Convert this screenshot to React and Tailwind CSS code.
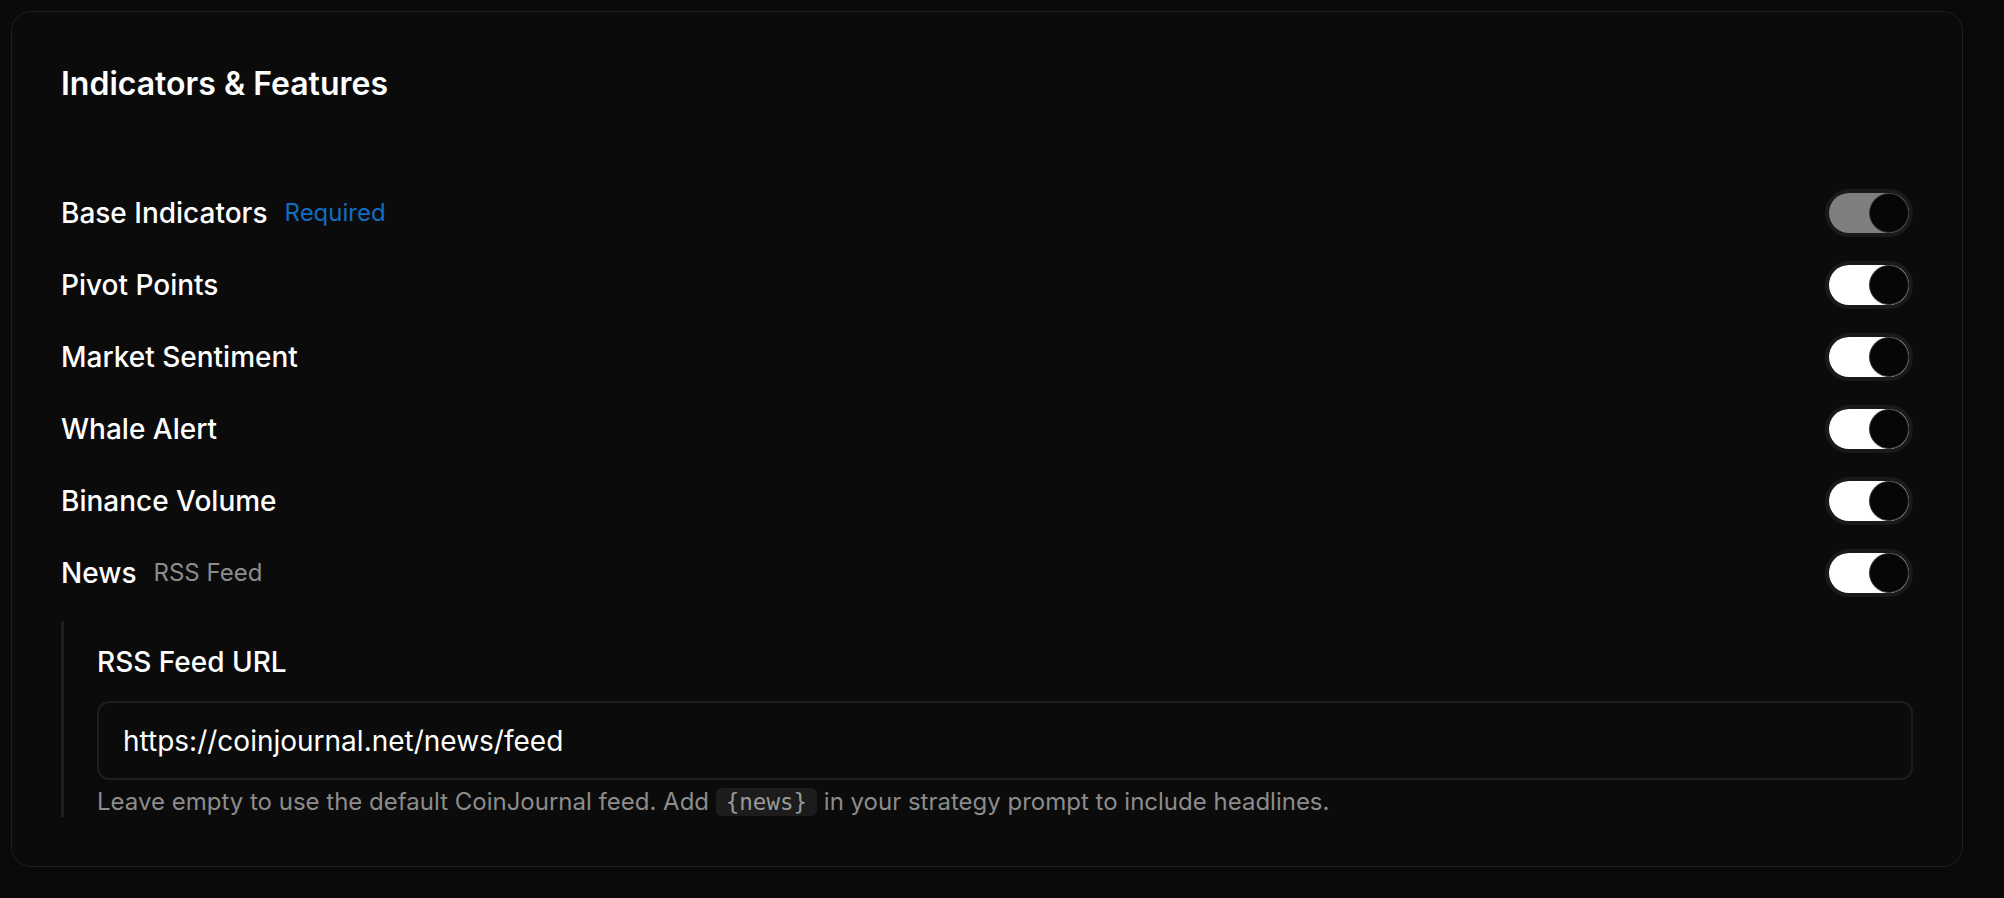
import React, { useState } from "react";

const features = [
  { key: "base", label: "Base Indicators", tag: "Required", tagTone: "blue", locked: true },
  { key: "pivot", label: "Pivot Points" },
  { key: "sentiment", label: "Market Sentiment" },
  { key: "whale", label: "Whale Alert" },
  { key: "volume", label: "Binance Volume" },
  { key: "news", label: "News", tag: "RSS Feed", tagTone: "gray" },
];

// Toggle switch
function Toggle({ checked, disabled, onChange }) {
  return (
    <button
      type="button"
      onClick={() => !disabled && onChange(!checked)}
      className="rounded-full border-4 border-[#1a1a1a] p-0"
    >
      <span
        className={`flex h-[40px] w-[80px] items-center rounded-full ${
          checked ? "justify-end" : "justify-start"
        } ${
          disabled
            ? "bg-[#7f7f7f]"
            : "bg-gradient-to-r from-white via-white to-[#e6e6e6]"
        }`}
      >
        <span className="h-[40px] w-[40px] rounded-full border border-[#3a3a3a] bg-[#060606]" />
      </span>
    </button>
  );
}

export default function App() {
  const [state, setState] = useState({
    base: true,
    pivot: true,
    sentiment: true,
    whale: true,
    volume: true,
    news: true,
  });
  const [feed, setFeed] = useState("https://coinjournal.net/news/feed");

  return (
    <div
      className="min-h-screen bg-[#0a0a0a] pl-[11px] pt-[11px] text-white"
      style={{ fontFamily: "Inter, 'Noto Sans', sans-serif" }}
    >
      <div className="w-[1952px] rounded-[20px] border border-[#1f1f1f] bg-[#0b0b0b] px-[49px] pb-[49px] pt-[52px]">
        <h2 className="text-[32px] font-semibold leading-[40px]">
          Indicators &amp; Features
        </h2>

        <div className="mt-[73px] flex flex-col">
          {features.map((f) => (
            <div key={f.key} className="flex h-[72px] items-center justify-between">
              <div className="flex items-center gap-[17px]">
                <span className="text-[28px] font-medium">{f.label}</span>
                {f.tag && (
                  <span
                    className={`text-[24px] ${
                      f.tagTone === "blue" ? "text-[#136cc0]" : "text-[#8c8c8c]"
                    }`}
                  >
                    {f.tag}
                  </span>
                )}
              </div>
              <Toggle
                checked={state[f.key]}
                disabled={f.locked}
                onChange={(v) => setState({ ...state, [f.key]: v })}
              />
            </div>
          ))}
        </div>

        {/* RSS settings */}
        {state.news && (
          <div className="mt-[12px] border-l-[3px] border-[#1f1f1f] pl-[33px] pt-[25px]">
            <label className="block text-[28px] font-medium leading-[32px]">
              RSS Feed URL
            </label>
            <input
              value={feed}
              onChange={(e) => setFeed(e.target.value)}
              className="mt-[23px] block h-[79px] w-full rounded-[12px] border-2 border-[#1e1e1e] bg-[#0b0b0b] px-[24px] text-[28px] text-white outline-none"
            />
            <p className="mt-[7px] text-[24px] leading-[30px] text-[#8c8c8c]">
              Leave empty to use the default CoinJournal feed. Add{" "}
              <code className="rounded-[6px] bg-[#1c1c1c] px-[10px] py-[1px] font-['DejaVu_Sans_Mono',monospace] text-[22.5px] text-[#9a9a9a]">
                {"{news}"}
              </code>{" "}
              in your strategy prompt to include headlines.
            </p>
          </div>
        )}
      </div>
    </div>
  );
}
